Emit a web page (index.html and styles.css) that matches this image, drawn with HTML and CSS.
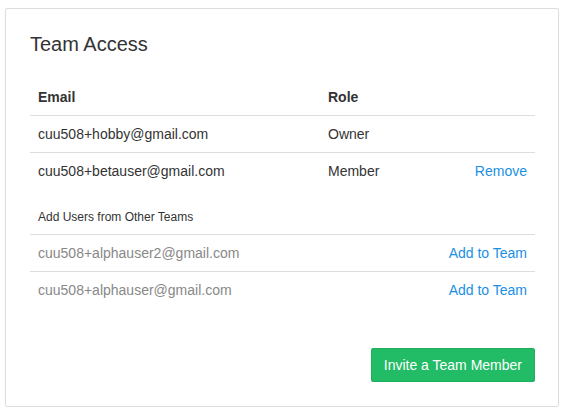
FILE: index.html
```html
<!DOCTYPE html>
<html>
<head>
<meta charset="utf-8">
<link rel="stylesheet" href="styles.css">
</head>
<body>
<div class="card">
  <h2 class="title">Team Access</h2>
  <table class="team">
    <thead>
      <tr>
        <th class="col-email">Email</th>
        <th class="col-role">Role</th>
        <th></th>
      </tr>
    </thead>
    <tbody>
      <tr>
        <td>cuu508+hobby@gmail.com</td>
        <td>Owner</td>
        <td></td>
      </tr>
      <tr>
        <td>cuu508+betauser@gmail.com</td>
        <td>Member</td>
        <td class="action"><a href="#">Remove</a></td>
      </tr>
      <tr class="section">
        <td colspan="3">Add Users from Other Teams</td>
      </tr>
      <tr class="other">
        <td colspan="2">cuu508+alphauser2@gmail.com</td>
        <td class="action"><a href="#">Add to Team</a></td>
      </tr>
      <tr class="other">
        <td colspan="2">cuu508+alphauser@gmail.com</td>
        <td class="action"><a href="#">Add to Team</a></td>
      </tr>
    </tbody>
  </table>
  <div class="footer">
    <button class="btn-invite">Invite a Team Member</button>
  </div>
</div>
</body>
</html>
```

FILE: styles.css
```css
* { box-sizing: border-box; }
body {
  margin: 0;
  padding: 8px 6px 0 5px;
  font-family: "Liberation Sans", Arial, sans-serif;
  font-size: 14px;
  line-height: 20px;
  color: #333;
  background: #fff;
}
.card {
  width: 554px;
  height: 399px;
  border: 1px solid #ddd;
  border-radius: 2px;
  box-shadow: 0 1px 1px rgba(0,0,0,0.04);
  padding: 23px 23px 24px 24px;
  display: flex;
  flex-direction: column;
}
.title {
  margin: 0 0 23px 0;
  font-size: 20px;
  font-weight: normal;
  line-height: 24px;
  color: #333;
}
.team {
  width: 505px;
  border-collapse: collapse;
  border-spacing: 0;
}
.team th {
  text-align: left;
  font-weight: bold;
  padding: 8px;
  border-bottom: 1px solid #ddd;
}
.col-email { width: 290px; }
.team td {
  padding: 8px;
  border-top: 1px solid #ddd;
  vertical-align: top;
}
.team tbody tr:first-child td { border-top: none; }
.team td.action { text-align: right; }
.team a {
  color: #1b8fe4;
  text-decoration: none;
}
.team tr.section td {
  border-top: none;
  font-size: 12px;
  line-height: 17px;
  padding: 20px 8px 8px;
}
.team tr.other td { color: #888; }
.footer {
  display: flex;
  justify-content: flex-end;
  width: 505px;
  margin-top: 40px;
}
.btn-invite {
  font-family: "Liberation Sans", Arial, sans-serif;
  font-size: 14px;
  line-height: 20px;
  padding: 6px 12px;
  color: #fff;
  background: #22bb66;
  border: 1px solid #1fae5e;
  border-radius: 2px;
  cursor: pointer;
}
```
